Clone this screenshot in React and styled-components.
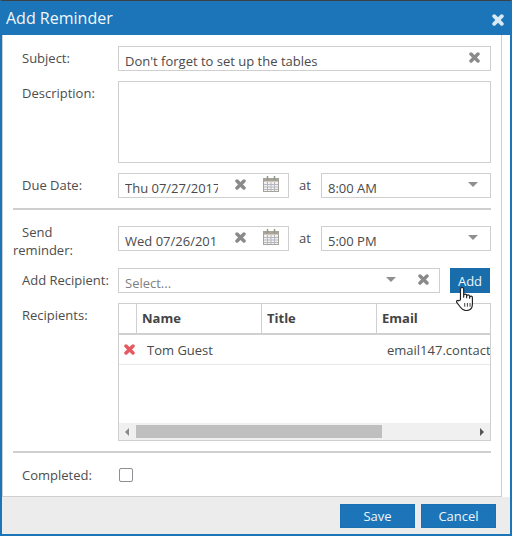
import React from "react";
import styled, { createGlobalStyle } from "styled-components";

const Global = createGlobalStyle`
  html, body { margin: 0; padding: 0; background: #fff; }
  body { font-family: "Open Sans", "Liberation Sans", sans-serif; font-size: 13px; color: #4a4a4a; }
  * { box-sizing: border-box; }
`;

const Dialog = styled.div`
  width: 512px; height: 536px; display: flex; flex-direction: column;
  background: #fff; border-top: 1px solid #3a3f44; border-left: 2px solid #1b75b8;
  border-right: 2px solid #1b75b8; border-bottom: 2px solid #1b75b8; overflow: hidden;
`;
const TitleBar = styled.header`
  height: 34px; margin-left: -2px; margin-right: -2px; padding: 0 8px 0 6px; background: #1b75b8; color: #fff;
  display: flex; align-items: center; justify-content: space-between; flex: none;
`;
const Title = styled.h1`margin: 0; font-size: 16px; font-weight: 400; line-height: 34px; color: #f2f7fb;`;
const CloseBtn = styled.span`display: flex; color: #d9e9f5; margin-top: 3px;`;
const Content = styled.div`display: flex; flex-direction: column; flex: 1; min-height: 0;`;
const Body = styled.main`
  width: 500px; height: 462px; flex: none; border: 1px solid #d0d0d0; border-top: 0;
  padding: 11px 10px 0 10px; display: flex; flex-direction: column;
`;
const Row = styled.div`
  display: flex; align-items: flex-start; margin-top: ${p => p.$top || 0}px; flex: none;
  height: ${p => p.$h ? p.$h + "px" : "auto"};
`;
const Label = styled.label`
  width: 105px; flex: none; padding-left: 9px; line-height: 18px; padding-top: 3px; color: #4d4d4d;
`;
const TwoLineLabel = styled(Label)`padding-left: 0; padding-top: 0; margin-top: -3px;`;
const CheckLabel = styled(Label)`padding-top: 0; margin-top: -2px;`;
const Indent = styled.span`display: block; padding-left: 9px;`;
const Field = styled.div`
  height: 25px; width: ${p => p.$w ? p.$w + "px" : "auto"}; flex: ${p => p.$w ? "none" : 1};
  border: 1px solid #cfcfcf; background: #fff; display: flex; align-items: center; padding: 0 6px;
`;
const Value = styled.span`
  display: block; overflow: hidden; white-space: nowrap; line-height: 18px; padding-top: 5px; height: 24px;
  color: ${p => p.$muted ? "#7f7f7f" : "#4a4a4a"}; width: ${p => p.$w ? p.$w + "px" : "auto"}; flex: ${p => p.$w ? "none" : 1};
`;
const TextArea = styled.div`flex: 1; height: 82px; border: 1px solid #cfcfcf;`;
const CrossSvg = styled.svg`
  width: ${p => p.$size}px; height: ${p => p.$size}px; flex: none; display: block;
  margin-left: ${p => p.$ml || 0}px; margin-right: ${p => p.$mr || 0}px; margin-top: ${p => p.$mt || 0}px;
`;
const CalIcon = styled.svg`width: 16px; height: 16px; flex: none; margin-left: 17px; margin-top: -3px;`;
const At = styled.span`width: 32px; flex: none; padding-left: 10px; line-height: 18px; margin-top: 3px;`;
const Caret = styled.span`
  width: 0; height: 0; border-left: 5px solid transparent; border-right: 5px solid transparent; border-top: 5px solid #8f8f8f;
  margin-top: -2px; margin-right: ${p => p.$mr || 0}px; flex: none;
`;
const Rule = styled.hr`margin: ${p => p.$top}px 0 0 0; border: 0; height: 2px; background: #cfcfcf; flex: none;`;
const AddWrap = styled.div`position: relative; margin-left: 10px; width: 41px; flex: none;`;
const AddButton = styled.button`
  width: 40px; height: 25px; border: 0; padding: 0; background: #196dab; color: #eef5fa; font: inherit; font-size: 13px; display: block;
`;
const Hand = styled.svg`position: absolute; left: 6px; top: 19px; width: 18px; height: 24px;`;
const GridBox = styled.div`flex: 1; min-width: 0; height: 138px; border: 1px solid #cfcfcf; display: flex; flex-direction: column; overflow: hidden;`;
const GridHead = styled.div`display: flex; height: 31px; border-bottom: 2px solid #d0d0d0; flex: none; font-weight: 700; color: #444;`;
const HeadCell = styled.div`
  width: ${p => p.$w}px; flex: none; border-left: ${p => p.$first ? 0 : "1px solid #d0d0d0"}; padding-left: 5px; line-height: 28px; white-space: nowrap;
`;
const GridRow = styled.div`display: flex; align-items: center; height: 30px; border-bottom: 1px solid #e8e8e8; flex: none; white-space: nowrap;`;
const RemoveCell = styled.span`width: 28px; flex: none; display: flex; padding-left: 5px;`;
const NameCell = styled.span`width: 240px; flex: none;`;
const EmailCell = styled.span`flex: 1; overflow: hidden;`;
const Spacer = styled.div`flex: 1;`;
const ScrollBar = styled.div`height: 17px; background: #f0f0f0; display: flex; align-items: center; flex: none;`;
const ScrollThumb = styled.div`width: 246px; height: 13px; background: #bfbfbf; margin-left: 7px;`;
const Arrow = styled.span`
  width: 0; height: 0; border-top: 4px solid transparent; border-bottom: 4px solid transparent; flex: none;
  ${p => p.$dir === "left" ? "border-right: 4px solid #8a8a8a; margin-left: 6px;" : "border-left: 4px solid #555; margin-left: 98px;"}
`;
const Check = styled.span`
  width: 14px; height: 14px; margin-left: 1px; border: 1px solid #8b8f94; border-radius: 2px; background: #fff; flex: none;
`;
const Footer = styled.footer`
  flex: 1; background: #ececec; display: flex; justify-content: flex-end; gap: 6px; padding: 7px 14px 0 0;
`;
const FootButton = styled.button`
  width: 75px; height: 24px; border: 1px solid #1a70b0; background: #1b75b8; color: #f0f6fb; font: inherit; font-size: 13px; padding: 0; line-height: 20px;
`;

const Cross = ({ size = 11, color = "#8a8a8a", ml, mr, mt = -3 }) => (
  <CrossSvg $size={size} $ml={ml} $mr={mr} $mt={mt} viewBox="0 0 12 12" aria-hidden="true">
    <path d="M2.200 2.200L9.800 9.800M9.800 2.200L2.200 9.800" stroke={color} strokeWidth="3.800" strokeLinecap="round" fill="none" />
  </CrossSvg>
);

const Calendar = () => (
  <CalIcon viewBox="0 0 16 16" aria-hidden="true">
    <rect x="0.500" y="2.500" width="15" height="13" fill="#f4f1ea" stroke="#a8a39a" />
    <rect x="0.500" y="2.500" width="15" height="3" fill="#a8a39a" />
    <path d="M1 8.500h14M1 11h14M1 13.500h14M4.500 6v9M8 6v9M11.500 6v9" stroke="#b5b8c4" strokeWidth="1" fill="none" />
    <path d="M4.500 0v4M11.500 0v4" stroke="#8d9a88" strokeWidth="1.500" fill="none" />
  </CalIcon>
);

export default function App() {
  return (
    <>
      <Global />
      <Dialog>
        <TitleBar>
          <Title>Add Reminder</Title>
          <CloseBtn><Cross size={12} color="#d9e9f5" mt={0} /></CloseBtn>
        </TitleBar>
        <Content>
          <Body>
            <Row>
              <Label>Subject:</Label>
              <Field><Value>Don't forget to set up the tables</Value><Cross mr={4} /></Field>
            </Row>
            <Row $top={10}>
              <Label>Description:</Label>
              <TextArea />
            </Row>
            <Row $top={10}>
              <Label>Due Date:</Label>
              <Field $w={171}><Value $w={93}>Thu 07/27/2017</Value><Cross ml={17} /><Calendar /></Field>
              <At>at</At>
              <Field><Value>8:00 AM</Value><Caret $mr={6} /></Field>
            </Row>
            <Rule $top={10} />
            <Row $top={16} $h={25}>
              <TwoLineLabel><Indent>Send</Indent>reminder:</TwoLineLabel>
              <Field $w={171}><Value $w={90}>Wed 07/26/2017</Value><Cross ml={20} /><Calendar /></Field>
              <At>at</At>
              <Field><Value>5:00 PM</Value><Caret $mr={6} /></Field>
            </Row>
            <Row $top={17}>
              <Label>Add Recipient:</Label>
              <Field><Value $muted>Select...</Value><Caret $mr={22} /><Cross mr={4} /></Field>
              <AddWrap>
                <AddButton>Add</AddButton>
                <Hand viewBox="1 1 16.500 22.500" aria-hidden="true">
                  <path d="M5 13V3a1.500 1.500 0 0 1 3 0v7.500V9a1.400 1.400 0 0 1 2.800 0v2V9.800a1.400 1.400 0 0 1 2.800 0v1.700-.7a1.300 1.300 0 0 1 2.600 0V17c0 3.500-2 6-5.500 6H10c-2.500 0-3.500-1-5-3l-3.500-4.500c-.8-1.200.8-2.500 2-1.500z" fill="#fff" stroke="#222" strokeWidth="1.100" strokeLinejoin="round" />
                  <path d="M9 16v3.500M11.500 16v3.500M14 16v3.500" stroke="#222" strokeWidth="0.800" />
                </Hand>
              </AddWrap>
            </Row>
            <Row $top={10}>
              <Label>Recipients:</Label>
              <GridBox>
                <GridHead>
                  <HeadCell $first $w={17} />
                  <HeadCell $w={125}>Name</HeadCell>
                  <HeadCell $w={115}>Title</HeadCell>
                  <HeadCell $w={120}>Email</HeadCell>
                </GridHead>
                <GridRow>
                  <RemoveCell><Cross color="#e8595f" mt={0} /></RemoveCell>
                  <NameCell>Tom Guest</NameCell>
                  <EmailCell>email147.contact@example.com</EmailCell>
                </GridRow>
                <Spacer />
                <ScrollBar>
                  <Arrow $dir="left" />
                  <ScrollThumb />
                  <Arrow $dir="right" />
                </ScrollBar>
              </GridBox>
            </Row>
            <Rule $top={10} />
            <Row $top={15}>
              <CheckLabel>Completed:</CheckLabel>
              <Check />
            </Row>
          </Body>
          <Footer>
            <FootButton>Save</FootButton>
            <FootButton>Cancel</FootButton>
          </Footer>
        </Content>
      </Dialog>
    </>
  );
}
